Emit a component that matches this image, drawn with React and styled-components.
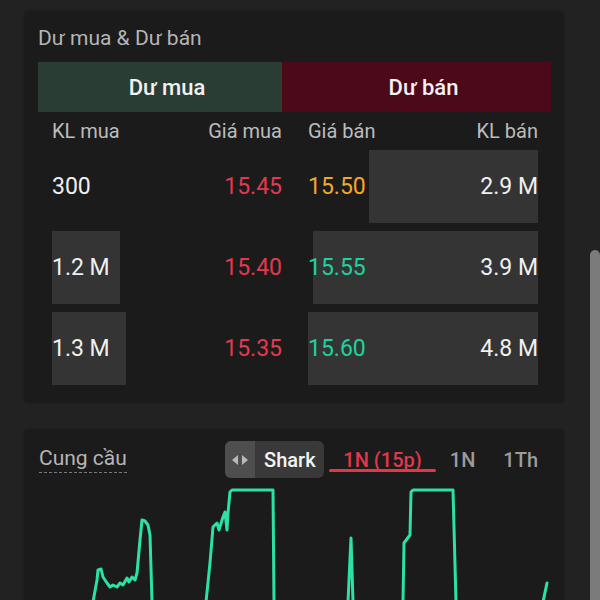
import React from 'react';
import styled, { createGlobalStyle } from 'styled-components';

const GlobalStyle = createGlobalStyle`
  html, body {
    margin: 0;
    padding: 0;
    background: #222222;
    font-family: Roboto, "Noto Sans", "Liberation Sans", sans-serif;
    overflow: hidden;
  }
`;

const Page = styled.div`
  width: 600px;
  height: 600px;
  box-sizing: border-box;
  padding: 12px 37px 0 25px;
  display: flex;
  flex-direction: column;
  gap: 28px;
  overflow: hidden;
`;

const Card = styled.section`
  background: #1b1b1b;
  box-shadow: 0 0 3px rgba(0, 0, 0, 0.55);
  border-radius: 3px;
  box-sizing: border-box;
  padding: ${p => p.pad || '13px 12px 0 13px'};
  height: ${p => p.h}px;
  flex-shrink: 0;
`;

const Title = styled.div`
  font-size: 21px;
  line-height: 26px;
  color: #b5b5b5;
  margin-bottom: 11px;
`;

const Tabs = styled.div`
  display: grid;
  grid-template-columns: 244px 1fr;
  height: 50px;
`;

const SideTab = styled.div`
  background: ${p => (p.sell ? '#4b0919' : '#2a3d35')};
  color: #f2f2f2;
  font-size: 22px;
  font-weight: 500;
  display: flex;
  align-items: center;
  justify-content: center;
  padding-left: 14px;
`;

const Table = styled.div`
  padding: 0 13px 0 14px;
`;

const RowList = styled.div`
  display: flex;
  flex-direction: column;
  gap: 8px;
`;

const Row = styled.div`
  display: grid;
  grid-template-columns: 230px 230px;
  column-gap: 26px;
  height: ${p => p.h}px;
`;

const Half = styled.div`
  position: relative;
  display: flex;
  align-items: center;
  justify-content: space-between;
`;

const Bar = styled.div`
  position: absolute;
  top: 0;
  bottom: 0;
  ${p => (p.sell ? 'right: 0;' : 'left: 0;')}
  background: #343434;
`;

const Head = styled.span`
  font-size: 20px;
  color: #bcbcbc;
  position: relative;
`;

const Cell = styled.span`
  position: relative;
  font-size: 23px;
  color: ${p => p.color || '#f0f0f0'};
`;

const ChartHeader = styled.div`
  display: flex;
  align-items: center;
  height: 37px;
`;

const ChartTitle = styled.div`
  font-size: 21px;
  line-height: 25px;
  color: #b5b5b5;
  border-bottom: 1px dashed #7a7a7a;
  padding-bottom: 1px;
  margin: 0 auto 0 1px;
`;

const SharkButton = styled.div`
  display: flex;
  align-items: stretch;
  height: 37px;
  width: 99px;
  border-radius: 6px;
  overflow: hidden;
  background: #393939;
  margin-right: 5px;
`;

const SharkIcon = styled.div`
  width: 30px;
  background: #4e4e4e;
  display: flex;
  align-items: center;
  justify-content: center;
`;

const SharkLabel = styled.div`
  flex: 1;
  display: flex;
  align-items: center;
  justify-content: center;
  color: #f4f4f4;
  font-size: 20px;
  font-weight: 500;
`;

const Period = styled.div`
  height: 37px;
  padding: 0 14px;
  display: flex;
  align-items: center;
  font-size: 20px;
  font-weight: 500;
  color: ${p => (p.active ? '#e0384a' : '#9c9c9c')};
  position: relative;
  &::after {
    content: '';
    display: ${p => (p.active ? 'block' : 'none')};
    position: absolute;
    left: 0;
    right: 0;
    bottom: 6px;
    height: 3px;
    border-radius: 2px;
    background: #e0384a;
  }
`;

const Chart = styled.svg`
  display: block;
  margin-top: 10px;
  margin-left: -13px;
`;

const ScrollThumb = styled.div`
  position: fixed;
  right: 0;
  top: 250px;
  width: 10px;
  height: 360px;
  background: #7b7b7b;
  border-radius: 5px 5px 0 0;
`;

const RED = '#e23a4d';
const GREEN = '#1ed29f';
const ORANGE = '#f1a62d';

const rows = [
  { kl: '300', buyW: 0, buy: '15.45', sell: '15.50', sellColor: ORANGE, sellKl: '2.9 M', sellW: 169 },
  { kl: '1.2 M', buyW: 68, buy: '15.40', sell: '15.55', sellColor: GREEN, sellKl: '3.9 M', sellW: 225 },
  { kl: '1.3 M', buyW: 74, buy: '15.35', sell: '15.60', sellColor: GREEN, sellKl: '4.8 M', sellW: 230 },
];

const lines = [
  'M93 602 L97 580 L98 570 L101 569 L103 577 L107 583 L110 587 L113 585 L117 587 L120 583 L123 585 L127 578 L129 582 L132 577 L135 580 L137 573 L140 540 L142 520 L145 521 L148 525 L150 535 L152 602',
  'M206 602 L210 563 L213 527 L217 523 L219 530 L223 517 L225 512 L227 530 L228 513 L230 492 L232 490 L273 490 L274 602',
  'M348 602 L351 538 L353 602',
  'M403 602 L404 543 L407 539 L410 535 L411 492 L413 490 L453 490 L456 602',
  'M543 602 L547 583',
];

export default function App() {
  return (
    <>
      <GlobalStyle />
      <Page>
        <Card h={390}>
          <Title>Dư mua &amp; Dư bán</Title>
          <Tabs>
            <SideTab>Dư mua</SideTab>
            <SideTab sell>Dư bán</SideTab>
          </Tabs>
          <Table>
            <Row h={38}>
              <Half>
                <Head>KL mua</Head>
                <Head>Giá mua</Head>
              </Half>
              <Half>
                <Head>Giá bán</Head>
                <Head>KL bán</Head>
              </Half>
            </Row>
            <RowList>
              {rows.map(r => (
                <Row h={73} key={r.buy}>
                  <Half>
                    {r.buyW > 0 && <Bar style={{ width: r.buyW }} />}
                    <Cell>{r.kl}</Cell>
                    <Cell color={RED}>{r.buy}</Cell>
                  </Half>
                  <Half>
                    <Bar sell style={{ width: r.sellW }} />
                    <Cell color={r.sellColor}>{r.sell}</Cell>
                    <Cell>{r.sellKl}</Cell>
                  </Half>
                </Row>
              ))}
            </RowList>
          </Table>
        </Card>
        <Card h={300} pad="11px 11px 0 13px">
          <ChartHeader>
            <ChartTitle>Cung cầu</ChartTitle>
            <SharkButton>
              <SharkIcon>
                <svg width="18" height="12" viewBox="0 0 18 12">
                  <path d="M7 1 L1 6 L7 11 Z" fill="#b9b9b9" />
                  <path d="M11 1 L17 6 L11 11 Z" fill="#b9b9b9" />
                </svg>
              </SharkIcon>
              <SharkLabel>Shark</SharkLabel>
            </SharkButton>
            <Period active>1N (15p)</Period>
            <Period>1N</Period>
            <Period>1Th</Period>
          </ChartHeader>
          <Chart width="538" height="115" viewBox="25 488 538 115">
            {lines.map(d => (
              <path
                key={d}
                d={d}
                fill="none"
                stroke="#2be2a4"
                strokeWidth="3"
                strokeLinejoin="round"
                strokeLinecap="round"
              />
            ))}
          </Chart>
        </Card>
      </Page>
      <ScrollThumb />
    </>
  );
}
